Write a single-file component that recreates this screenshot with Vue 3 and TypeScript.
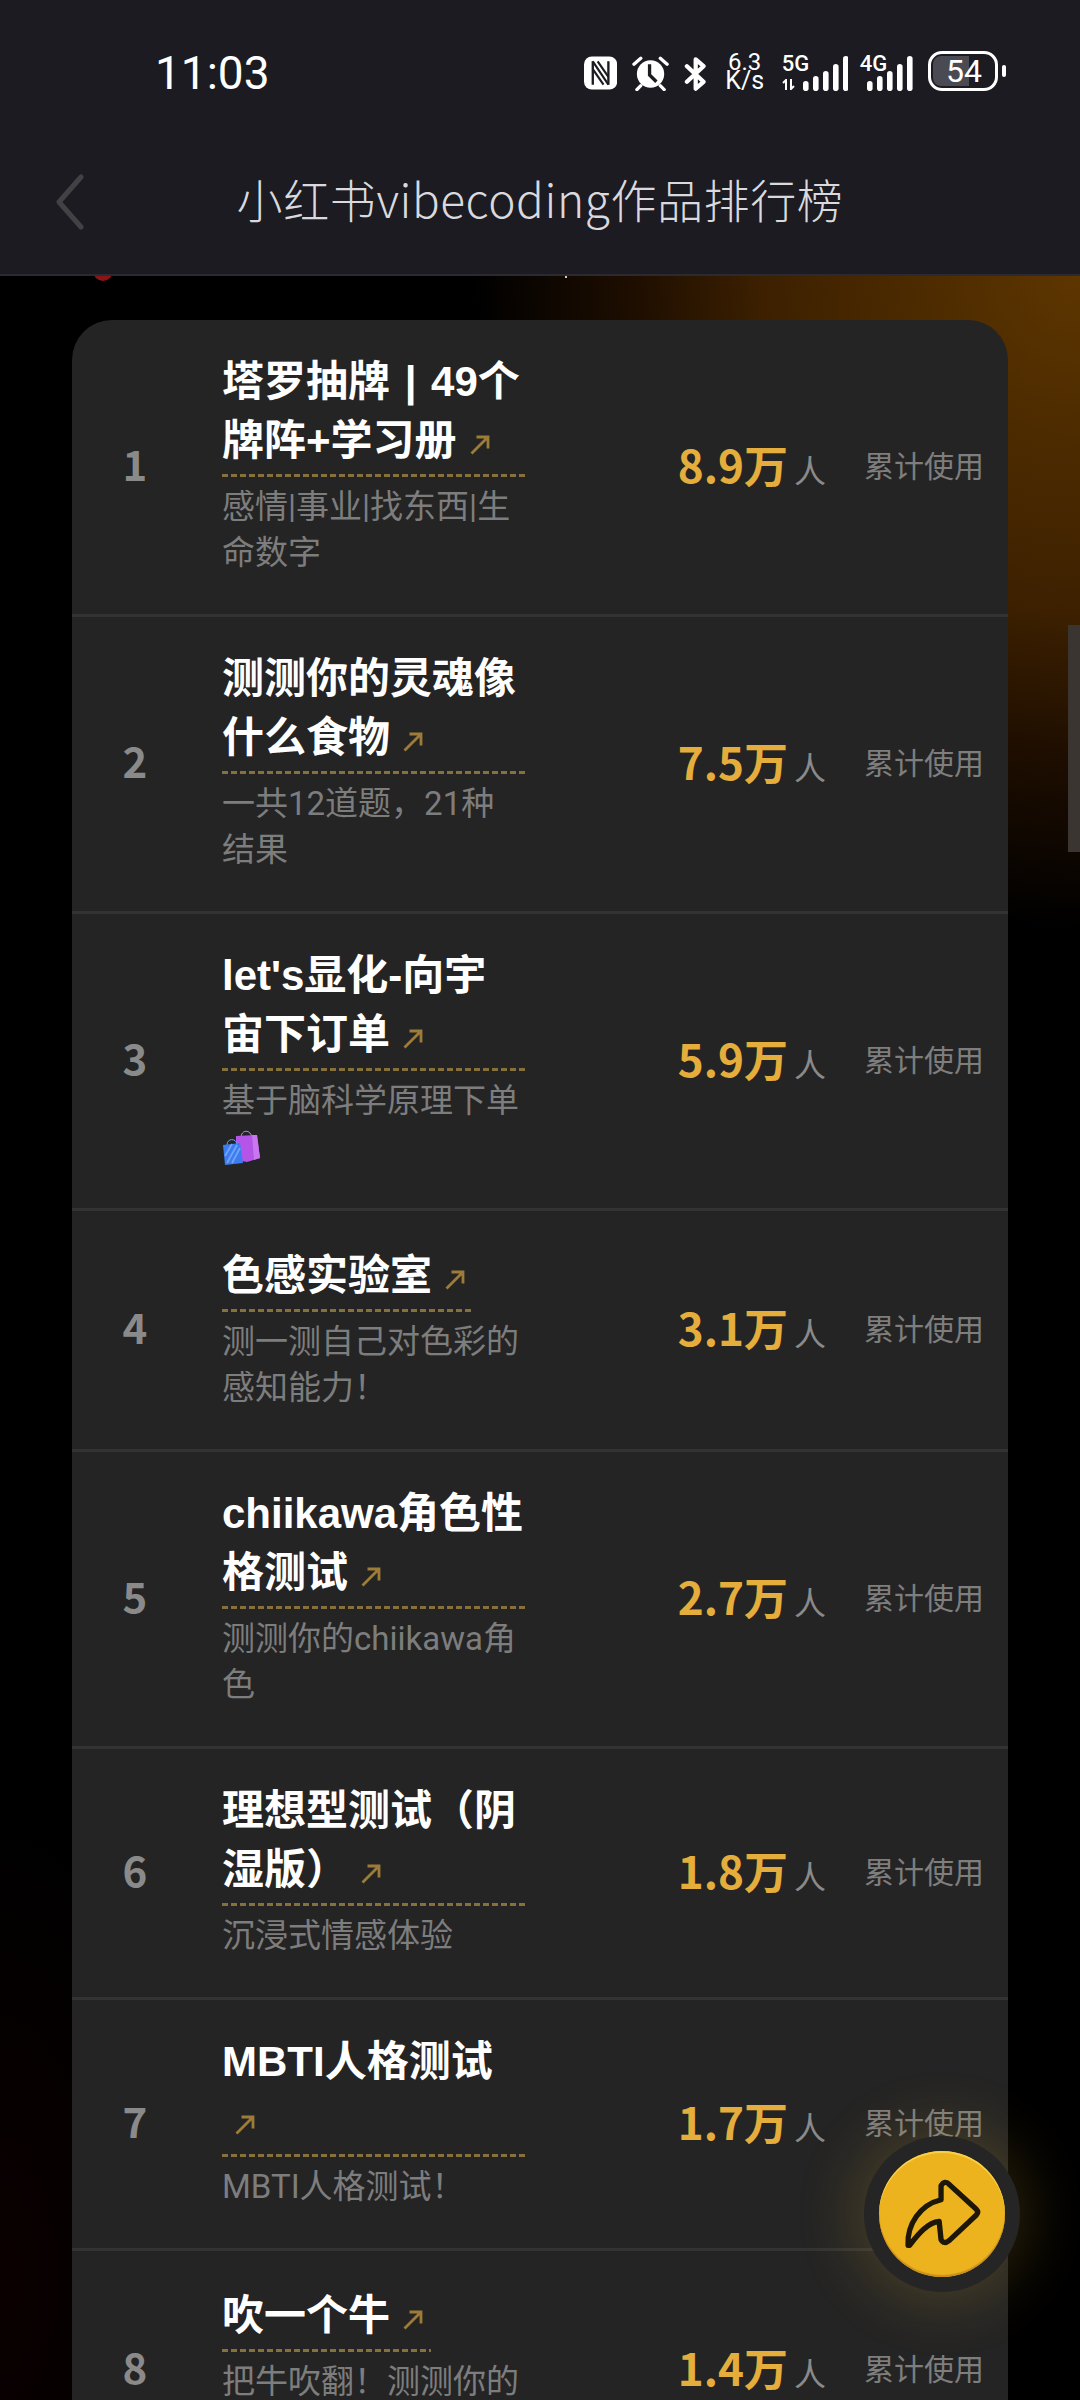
<script setup lang="ts">
interface Item {
  rank: number
  title: string
  sub: string
  count: string
  bag?: boolean
  single?: boolean
}
const items: Item[] = [
  { rank: 1, title: '塔罗抽牌 | 49个牌阵+学习册', sub: '感情|事业|找东西|生命数字', count: '8.9万' },
  { rank: 2, title: '测测你的灵魂像什么食物', sub: '一共12道题，21种结果', count: '7.5万' },
  { rank: 3, title: "let's显化-向宇宙下订单", sub: '基于脑科学原理下单', count: '5.9万', bag: true },
  { rank: 4, title: '色感实验室', sub: '测一测自己对色彩的感知能力！', count: '3.1万', single: true },
  { rank: 5, title: 'chiikawa角色性格测试', sub: '测测你的chiikawa角色', count: '2.7万' },
  { rank: 6, title: '理想型测试（阴湿版）', sub: '沉浸式情感体验', count: '1.8万' },
  { rank: 7, title: 'MBTI人格测试', sub: 'MBTI人格测试！', count: '1.7万' },
  { rank: 8, title: '吹一个牛', sub: '把牛吹翻！测测你的', count: '1.4万', single: true }
]
const bars = [
  { x: 1, h: 10 },
  { x: 11, h: 15 },
  { x: 21, h: 20 },
  { x: 31, h: 27 },
  { x: 41, h: 35 }
]
</script>

<template>
  <div class="screen">
    <header class="topbar">
      <div class="status">
        <span class="time">11:03</span>
        <div class="indicators">
          <svg class="nfc" width="34" height="34" viewBox="0 0 34 34">
            <rect width="34" height="34" rx="8" fill="#fff" />
            <path d="M9 5v24M25 5v24" stroke="#1b1b21" stroke-width="2.4" fill="none" />
            <path d="M9 5l16 24M14 5l11 16M9 13l11 16" stroke="#1b1b21" stroke-width="2.2" fill="none" />
          </svg>
          <svg class="alarm" width="38" height="36" viewBox="0 0 38 36">
            <circle cx="19" cy="19" r="14" fill="#fff" />
            <path d="M18 9v11l7 7" stroke="#1b1b21" stroke-width="3.4" fill="none" />
            <path d="M2 9l7-6M36 9l-7-6M9 31l-4 4M29 31l4 4" stroke="#fff" stroke-width="3.4" stroke-linecap="round" fill="none" />
          </svg>
          <svg class="bt" width="24" height="36" viewBox="0 0 24 36">
            <path d="M3 10l17 16-8 7V3l8 7L3 26" stroke="#fff" stroke-width="4.4" stroke-linejoin="round" stroke-linecap="round" fill="none" />
          </svg>
          <div class="speed"><span>6.3</span><span>K/s</span></div>
          <div class="net net-five">
            <div class="net-label">
              <span class="gen">5G</span>
              <svg width="14" height="11" viewBox="0 0 14 11">
                <path d="M4 11V1L1 4M9 0v10l3-3" stroke="#fff" stroke-width="2" fill="none" />
              </svg>
            </div>
            <svg width="46" height="36" viewBox="0 0 46 36">
              <rect v-for="b in bars" :key="b.x" :x="b.x" :y="36 - b.h" width="5.6" :height="b.h" rx="2.8" fill="#fff" />
            </svg>
          </div>
          <div class="net net-four">
            <span class="gen">4G</span>
            <svg width="48" height="36" viewBox="0 0 48 36">
              <rect v-for="b in bars" :key="b.x" :x="b.x" :y="36 - b.h" width="5.6" :height="b.h" rx="2.8" fill="#fff" />
            </svg>
          </div>
          <div class="battery">
            <div class="shell">
              <div class="level"></div>
              <span class="pct">54</span>
            </div>
            <div class="cap"></div>
          </div>
        </div>
      </div>
      <div class="navbar">
        <svg class="back" width="30" height="56" viewBox="0 0 30 56">
          <path d="M26 3L4 28l22 25" stroke="#424245" stroke-width="5" stroke-linecap="round" stroke-linejoin="round" fill="none" />
        </svg>
        <h1 class="page-title">小红书vibecoding作品排行榜</h1>
      </div>
    </header>

    <i class="peek-dot"></i>
    <i class="peek-speck"></i>

    <main class="content">
      <section class="card">
        <article v-for="item in items" :key="item.rank" class="row">
          <div class="rank">{{ item.rank }}</div>
          <div class="info">
            <div class="title-wrap" :class="{ single: item.single }">
              <span class="title">{{ item.title }}</span><span class="arrow"><svg width="20" height="20" viewBox="0 0 20 20">
                <path d="M1.5 18.5L18 2M6.5 2H18v11.5" stroke="#9c7c38" stroke-width="2.8" fill="none" />
              </svg></span>
            </div>
            <p class="sub">{{ item.sub }}<svg v-if="item.bag" class="bag" width="38" height="36" viewBox="0 0 38 36">
                <path d="M19 8c0-9 10-9 11 0" stroke="#c98af0" stroke-width="1" fill="none" />
                <path d="M14 6l21-1 3 23-13 4-11-2z" fill="#b455e8" />
                <path d="M30 5l5 0 3 23-6 2z" fill="#c877ee" />
                <path d="M5 15c0-7 9-7 10-1" stroke="#6aa0f5" stroke-width="1" fill="none" />
                <path d="M1 15l17-2 3 20-18 2z" fill="#3c7cf0" />
                <path d="M5 33l10-18M10 33l8-15M3 26l7-12" stroke="#70a4f7" stroke-width="1.8" fill="none" />
              </svg></p>
          </div>
          <div class="count"><b>{{ item.count }}</b><span>人</span></div>
          <div class="used">累计使用</div>
        </article>
      </section>
    </main>

    <i class="scroll-thumb"></i>

    <button class="fab" type="button" aria-label="分享">
      <svg width="82" height="74" viewBox="200 245 215 195">
        <path d="M218 425C215 370 250 318 305 305V268Q315 252 327 265L398 330Q405 337 398 345L327 412Q312 424 305 410L300 362C270 365 245 395 222 425Z" stroke="#1d1709" stroke-width="14" stroke-linejoin="round" fill="none" />
      </svg>
    </button>
  </div>
</template>

<style>
html, body { margin: 0; background: #000; }
</style>

<style scoped>
.screen {
  position: relative;
  width: 1080px;
  height: 2400px;
  overflow: hidden;
  font-family: "Noto Sans CJK SC", "Noto Sans", sans-serif;
  background:
    radial-gradient(ellipse 640px 700px at 100% 11%, rgb(94, 54, 0) 0%, rgb(60, 32, 0) 50%, rgb(30, 14, 0) 70%, rgba(0, 0, 0, 0) 95%),
    radial-gradient(ellipse 200px 500px at 0% 95%, rgba(22, 0, 0, 0.5), rgba(0, 0, 0, 0) 100%),
    #000;
}
.topbar {
  position: relative;
  z-index: 2;
  height: 274px;
  background: #1b1b21;
  border-bottom: 2px solid #2a2a30;
}
.status {
  height: 148px;
  box-sizing: border-box;
  padding: 50px 74px 0 155px;
  display: flex;
  justify-content: space-between;
  align-items: flex-start;
}
.time {
  font-family: Roboto, sans-serif;
  font-size: 46px;
  line-height: 46px;
  color: #fff;
}
.indicators {
  display: flex;
  align-items: flex-start;
  margin-top: 3px;
  width: 422px;
  color: #fff;
  font-family: Roboto, sans-serif;
}
.nfc { margin-top: 3px; }
.alarm { margin: 2px 0 0 15px; }
.bt { margin: 3px 0 0 15px; }
.speed {
  display: flex;
  flex-direction: column;
  align-items: center;
  width: 38px;
  margin-left: 18px;
}
.speed span {
  display: block;
  height: 18px;
  font-size: 24px;
  line-height: 18px;
}
.speed span:last-child {
  height: 20px;
  line-height: 20px;
  font-size: 25px;
}
.net {
  display: flex;
  margin-top: 2px;
}
.net-five { margin-left: 18px; width: 80px; }
.net-five .net-label {
  display: flex;
  flex-direction: column;
  width: 20px;
  gap: 6px;
}
.net-five svg { flex: none; }
.net-four { width: 70px; }
.gen {
  font-size: 22px;
  line-height: 18px;
  font-weight: 500;
  width: 25px;
  flex: none;
}
.net-four svg { margin-left: -19px; flex: none; }
.battery {
  display: flex;
  align-items: center;
  margin-top: -2px;
}
.shell {
  position: relative;
  box-sizing: border-box;
  width: 70px;
  height: 40px;
  border: 3px solid #fff;
  border-radius: 14px;
  overflow: hidden;
}
.level {
  position: absolute;
  left: 0;
  top: 0;
  bottom: 0;
  width: 36px;
  margin: 2px 0 2px 2px;
  background: #4a4a52;
  border-radius: 8px 0 0 8px;
}
.pct {
  position: relative;
  display: block;
  font-size: 32px;
  line-height: 34px;
  padding-left: 15px;
}
.cap {
  width: 4px;
  height: 12px;
  margin-left: 4px;
  border-radius: 2px;
  background: #fff;
}
.navbar {
  position: relative;
  height: 126px;
  display: flex;
  align-items: center;
  justify-content: center;
}
.back {
  position: absolute;
  left: 55px;
  top: 26px;
}
.page-title {
  margin: -26px 0 0;
  font-size: 46px;
  font-weight: 300;
  letter-spacing: 0.6px;
  color: #d9d9de;
  white-space: nowrap;
}
.peek-dot {
  position: absolute;
  z-index: 1;
  left: 93px;
  top: 261px;
  width: 20px;
  height: 20px;
  border-radius: 50%;
  background: #8a1519;
}
.peek-speck {
  position: absolute;
  z-index: 1;
  left: 565px;
  top: 276px;
  width: 2px;
  height: 2px;
  background: #cfcfcf;
}
.content {
  padding: 44px 72px 0;
}
.card {
  background: #242424;
  border-radius: 40px 40px 0 0;
}
.row {
  display: flex;
  align-items: center;
  padding: 32px 24px 38px 0;
  border-bottom: 3px solid #333;
}
.rank {
  flex: none;
  width: 124px;
  margin: -2px 0 0 1px;
  text-align: center;
  font-size: 42px;
  line-height: 1;
  font-weight: 700;
  color: #8a8a8a;
}
.info {
  flex: none;
  width: 306px;
  margin: -3px 0 0 25px;
}
.row:last-child .info {
  padding-bottom: 46px;
}
.title-wrap {
  display: inline-block;
  max-width: 308px;
  padding: 3px 0 7px;
  font-family: "Liberation Sans", "Noto Sans CJK SC", sans-serif;
  font-size: 42px;
  line-height: 59px;
  font-weight: 700;
  word-spacing: 3px;
  color: #fff;
  background: repeating-linear-gradient(90deg, #86703c 0 6px, transparent 6px 9px) left bottom / min(100%, 306px) 3px no-repeat;
  vertical-align: top;
}
.title-wrap.single { padding-top: 6px; }
.arrow {
  display: inline-block;
  width: 41px;
  padding-left: 13px;
  box-sizing: border-box;
  line-height: 1;
}
.arrow svg { display: block; margin-top: 10px; }
.sub {
  margin: 7px 0 0;
  max-width: 302px;
  font-family: Roboto, "Noto Sans CJK SC", sans-serif;
  font-size: 33px;
  line-height: 46px;
  color: #7d7d7d;
}
.bag { display: block; margin: 6px 0 4px; }
.count {
  flex: none;
  margin: 5px 0 0 auto;
  display: flex;
  align-items: baseline;
  white-space: nowrap;
}
.count b {
  font-size: 44px;
  line-height: 1;
  font-weight: 700;
  color: #e5ae3c;
}
.count span {
  margin-left: 6px;
  font-size: 32px;
  color: #8a8a8a;
}
.used {
  flex: none;
  margin-left: 38px;
  font-size: 30px;
  line-height: 1;
  color: #7e7e7e;
  white-space: nowrap;
}
.scroll-thumb {
  position: absolute;
  right: 0;
  top: 625px;
  width: 12px;
  height: 227px;
  background: #3b3531;
}
.fab {
  position: absolute;
  left: 879px;
  top: 2151px;
  box-sizing: border-box;
  width: 126px;
  height: 126px;
  padding: 0;
  border: none;
  border-radius: 50%;
  background: #edb31f;
  box-shadow:
    inset 0 2px 0 #f7d04a,
    inset 0 -2px 1px #c8901a,
    0 0 0 15px #252525,
    0 0 60px 25px rgba(220, 170, 50, 0.2);
  display: flex;
  align-items: center;
  justify-content: center;
}
</style>
